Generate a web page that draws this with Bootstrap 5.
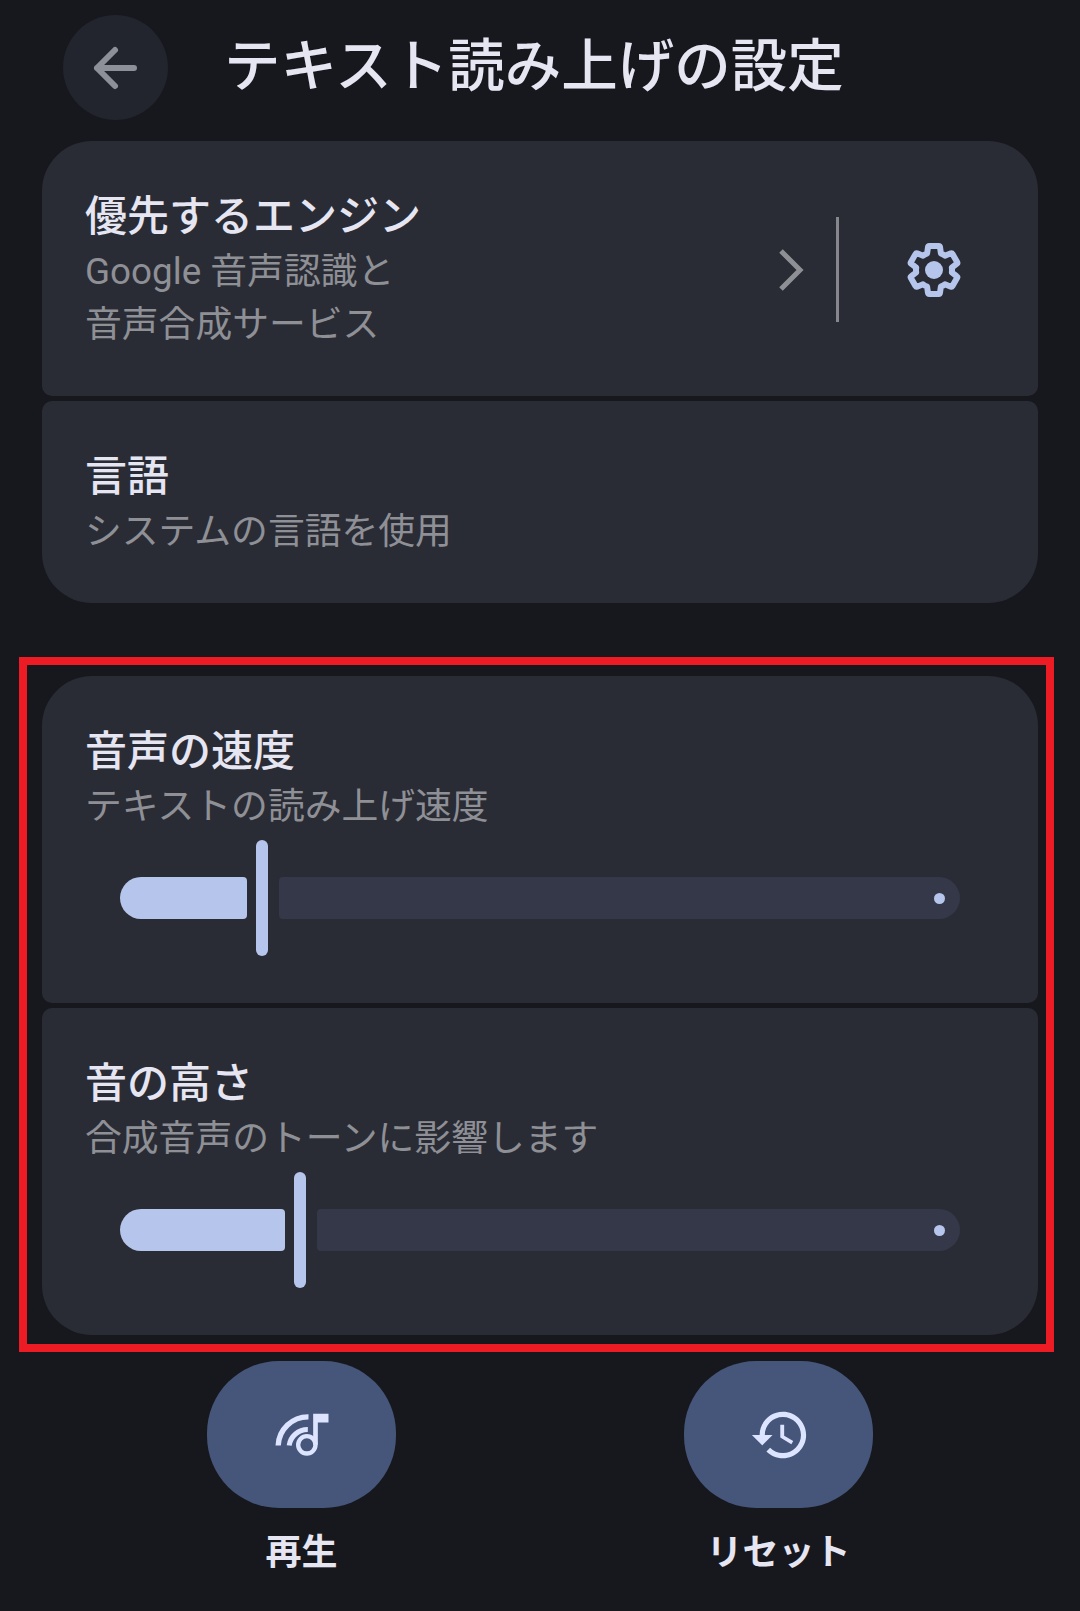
<!DOCTYPE html>
<html lang="ja">
  <head>
    <meta charset="UTF-8" />
    <meta name="viewport" content="width=device-width, initial-scale=1.0" />
    <title>テキスト読み上げの設定</title>
    <link href="https://cdn.jsdelivr.net/npm/bootstrap@5.3.3/dist/css/bootstrap.min.css" rel="stylesheet" />
    <style>
      body {
        background: #17181e;
        color: #e6e6f2;
        font-family: "Roboto", "Noto Sans CJK JP", sans-serif;
      }
      .page-head { padding: 15px 0 21px 63px; }
      .back-btn {
        width: 105px;
        height: 105px;
        background: #22252e;
        margin-right: 56px;
      }
      .page-title { font-size: 56.5px; line-height: 105px; font-weight: 500; margin: 0; }
      .group-wrap { margin: 0 42px; }
      .setting {
        background: #2a2c35;
        border-radius: 10px;
        padding: 47px 43px 45px;
        margin-bottom: 5px;
      }
      .setting-first { border-top-left-radius: 50px; border-top-right-radius: 50px; }
      .setting-last { border-bottom-left-radius: 50px; border-bottom-right-radius: 50px; margin-bottom: 0; }
      .setting-name { font-size: 42px; line-height: 57px; font-weight: 500; }
      .setting-sub { font-size: 36.8px; line-height: 53px; color: #8e9096; }
      .setting-side { padding-right: 31px; }
      .side-rule { width: 3px; height: 105px; background: #85878d; margin: 0 65px 0 32px; }
      .red-frame {
        border: 8px solid #ed1c24;
        margin: 54px 26px 9px 19px;
        padding: 11px 8px 9px 15px;
      }
      .slider-row { height: 116px; margin: 7px 35px 2px; }
      .slider-fill {
        height: 42px;
        background: #b6c5ec;
        border-radius: 21px 4px 4px 21px;
      }
      .slider-thumb {
        width: 12px;
        height: 116px;
        background: #b6c5ec;
        border-radius: 6px;
        margin: 0 11px 0 9px;
      }
      .slider-track {
        height: 42px;
        background: #343849;
        border-radius: 4px 21px 21px 4px;
        padding-right: 15px;
      }
      .slider-dot { width: 11px; height: 11px; background: #b6c5ec; }
      .action-row { gap: 288px; }
      .action-col { width: 189px; }
      .action-btn {
        width: 189px;
        height: 147px;
        background: #45567a;
        border: 0;
        border-radius: 72px;
        color: #dde4ff;
      }
      .action-label { font-size: 36px; line-height: 50px; font-weight: 700; margin-top: 20px; white-space: nowrap; }
    </style>
  </head>
  <body>
    <!-- header -->
    <div class="page-head d-flex align-items-center">
      <div class="back-btn rounded-circle d-flex align-items-center justify-content-center flex-shrink-0">
        <svg width="48" height="48" viewBox="0 0 48 48" fill="none" stroke="#8d9098" stroke-width="6" stroke-linecap="round" stroke-linejoin="round">
          <path d="M5 24 H42 M23 6 L5 24 L23 42" />
        </svg>
      </div>
      <h1 class="page-title">テキスト読み上げの設定</h1>
    </div>

    <div class="group-wrap">
      <div class="setting setting-first d-flex align-items-center justify-content-between">
        <div>
          <div class="setting-name">優先するエンジン</div>
          <div class="setting-sub">Google 音声認識と<br />音声合成サービス</div>
        </div>
        <div class="setting-side d-flex align-items-center">
          <svg width="26" height="44" viewBox="0 0 26 44" fill="none" stroke="#8e9096" stroke-width="5">
            <path d="M3 3 L22 22 L3 41" />
          </svg>
          <div class="side-rule"></div>
          <svg width="60" height="60" viewBox="0 0 24 24" fill="none" stroke="#b6c5ec" stroke-width="2.4" stroke-linejoin="round">
            <path d="M19.14 12.94c.04-.3.06-.61.06-.94 0-.32-.02-.64-.07-.94l2.03-1.58c.18-.14.23-.41.12-.61l-1.92-3.32c-.12-.22-.37-.29-.59-.22l-2.39.96c-.5-.38-1.03-.7-1.62-.94l-.36-2.54c-.04-.24-.24-.41-.48-.41h-3.84c-.24 0-.43.17-.47.41l-.36 2.54c-.59.24-1.13.57-1.62.94l-2.39-.96c-.22-.08-.47 0-.59.22L2.74 8.87c-.12.21-.08.47.12.61l2.03 1.58c-.05.3-.09.63-.09.94s.02.64.07.94l-2.03 1.58c-.18.14-.23.41-.12.61l1.92 3.32c.12.22.37.29.59.22l2.39-.96c.5.38 1.03.7 1.62.94l.36 2.54c.05.24.24.41.48.41h3.84c.24 0 .44-.17.47-.41l.36-2.54c.59-.24 1.13-.56 1.62-.94l2.39.96c.22.08.47 0 .59-.22l1.92-3.32c.12-.22.07-.47-.12-.61l-2.01-1.58z" />
            <circle cx="12" cy="12" r="3.6" fill="#b6c5ec" stroke="none" />
          </svg>
        </div>
      </div>
      <div class="setting setting-last">
        <div class="setting-name">言語</div>
        <div class="setting-sub">システムの言語を使用</div>
      </div>
    </div>

    <!-- sliders -->
    <div class="red-frame">
      <div class="setting setting-first">
        <div class="setting-name">音声の速度</div>
        <div class="setting-sub">テキストの読み上げ速度</div>
        <div class="slider-row d-flex align-items-center">
          <div class="slider-fill flex-shrink-0" style="width: 127px"></div>
          <div class="slider-thumb flex-shrink-0"></div>
          <div class="slider-track flex-grow-1 d-flex align-items-center justify-content-end">
            <div class="slider-dot rounded-circle"></div>
          </div>
        </div>
      </div>
      <div class="setting setting-last">
        <div class="setting-name">音の高さ</div>
        <div class="setting-sub">合成音声のトーンに影響します</div>
        <div class="slider-row d-flex align-items-center">
          <div class="slider-fill flex-shrink-0" style="width: 165px"></div>
          <div class="slider-thumb flex-shrink-0"></div>
          <div class="slider-track flex-grow-1 d-flex align-items-center justify-content-end">
            <div class="slider-dot rounded-circle"></div>
          </div>
        </div>
      </div>
    </div>

    <!-- actions -->
    <div class="action-row d-flex justify-content-center">
      <div class="action-col d-flex flex-column align-items-center">
        <button class="action-btn d-flex align-items-center justify-content-center" type="button">
          <svg width="60" height="60" viewBox="274.5 190.5 180 180" fill="none" stroke="currentColor">
            <path d="M398 310 V217 H444 V243 H412 V310 Z" fill="currentColor" stroke="none" />
            <circle cx="379" cy="310" r="26" stroke-width="13" />
            <path d="M293 312 A 90 90 0 0 1 384 226" stroke-width="16" />
            <path d="M326 312 A 56 56 0 0 1 382 264" stroke-width="15" />
          </svg>
        </button>
        <div class="action-label">再生</div>
      </div>
      <div class="action-col d-flex flex-column align-items-center">
        <button class="action-btn d-flex align-items-center justify-content-center" type="button">
          <svg width="62" height="62" viewBox="-0.5 0 24 24" fill="currentColor">
            <path d="M13 3c-4.97 0-9 4.03-9 9H1l3.89 3.89.07.14L9 12H6c0-3.87 3.13-7 7-7s7 3.13 7 7-3.13 7-7 7c-1.93 0-3.68-.79-4.94-2.06l-1.42 1.42C8.27 19.99 10.51 21 13 21c4.97 0 9-4.03 9-9s-4.03-9-9-9zm-1 5v5l4.28 2.54.72-1.21-3.5-2.08V8H12z" />
          </svg>
        </button>
        <div class="action-label">リセット</div>
      </div>
    </div>

    <script src="https://cdn.jsdelivr.net/npm/bootstrap@5.3.3/dist/js/bootstrap.bundle.min.js"></script>
  </body>
</html>
